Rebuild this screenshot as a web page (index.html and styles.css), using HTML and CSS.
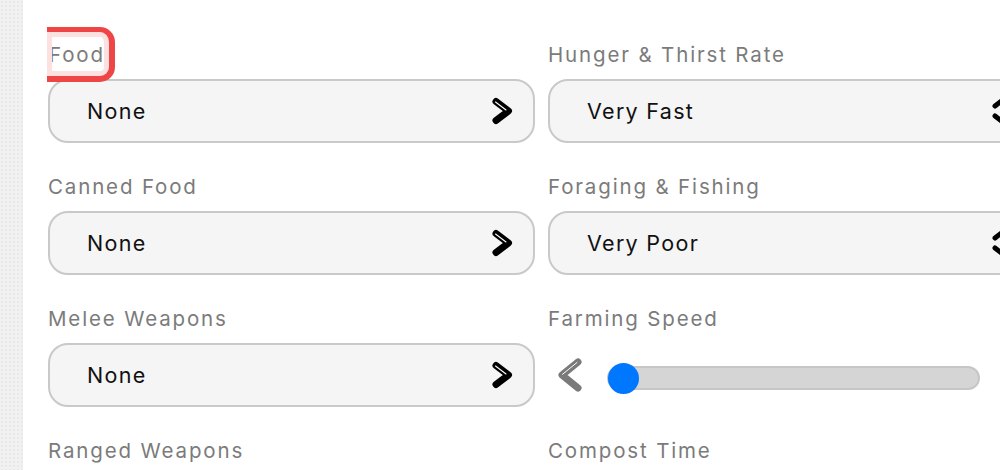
FILE: index.html
```html
<!DOCTYPE html>
<html>
<head>
<meta charset="utf-8">
<link rel="stylesheet" href="styles.css">
</head>
<body>
<div class="page">
  <aside class="strip"></aside>
  <main class="settings">
    <div class="field">
      <div class="label"><span class="focus">Food</span></div>
      <div class="select">
        <span class="value">None</span>
        <svg class="chev" width="22" height="28" viewBox="0 0 22 28"><polyline points="5,4.5 17.5,14 5,23.5" fill="none" stroke="#000" stroke-width="7" stroke-linecap="round" stroke-linejoin="round"/><polyline points="4.5,5 15,13" fill="none" stroke="#fff" stroke-width="1.1" stroke-linecap="round"/></svg>
      </div>
    </div>
    <div class="field">
      <div class="label">Hunger &amp; Thirst Rate</div>
      <div class="select">
        <span class="value">Very Fast</span>
        <svg class="chev" width="22" height="28" viewBox="0 0 22 28"><polyline points="4,9 11,3.5 18,9" fill="none" stroke="#000" stroke-width="5" stroke-linecap="round" stroke-linejoin="round"/><polyline points="4,19 11,24.5 18,19" fill="none" stroke="#000" stroke-width="5" stroke-linecap="round" stroke-linejoin="round"/></svg>
      </div>
    </div>
    <div class="field">
      <div class="label">Canned Food</div>
      <div class="select">
        <span class="value">None</span>
        <svg class="chev" width="22" height="28" viewBox="0 0 22 28"><polyline points="5,4.5 17.5,14 5,23.5" fill="none" stroke="#000" stroke-width="7" stroke-linecap="round" stroke-linejoin="round"/><polyline points="4.5,5 15,13" fill="none" stroke="#fff" stroke-width="1.1" stroke-linecap="round"/></svg>
      </div>
    </div>
    <div class="field">
      <div class="label">Foraging &amp; Fishing</div>
      <div class="select">
        <span class="value">Very Poor</span>
        <svg class="chev" width="22" height="28" viewBox="0 0 22 28"><polyline points="4,9 11,3.5 18,9" fill="none" stroke="#000" stroke-width="5" stroke-linecap="round" stroke-linejoin="round"/><polyline points="4,19 11,24.5 18,19" fill="none" stroke="#000" stroke-width="5" stroke-linecap="round" stroke-linejoin="round"/></svg>
      </div>
    </div>
    <div class="field">
      <div class="label">Melee Weapons</div>
      <div class="select">
        <span class="value">None</span>
        <svg class="chev" width="22" height="28" viewBox="0 0 22 28"><polyline points="5,4.5 17.5,14 5,23.5" fill="none" stroke="#000" stroke-width="7" stroke-linecap="round" stroke-linejoin="round"/><polyline points="4.5,5 15,13" fill="none" stroke="#fff" stroke-width="1.1" stroke-linecap="round"/></svg>
      </div>
    </div>
    <div class="field">
      <div class="label">Farming Speed</div>
      <div class="slider">
        <svg class="arrow" width="28" height="36" viewBox="0 0 28 36"><polyline points="22,5 6,18 22,31" fill="none" stroke="#7a7a7a" stroke-width="7" stroke-linecap="round" stroke-linejoin="round"/><polyline points="21,5.5 6.5,17.3" fill="none" stroke="#fff" stroke-width="1" stroke-linecap="round"/></svg>
        <div class="track"><span class="knob"></span></div>
        <svg class="arrow" width="28" height="36" viewBox="0 0 28 36"><polyline points="6,5 22,18 6,31" fill="none" stroke="#7a7a7a" stroke-width="7" stroke-linecap="round" stroke-linejoin="round"/></svg>
      </div>
    </div>
    <div class="field last">
      <div class="label">Ranged Weapons</div>
    </div>
    <div class="field last">
      <div class="label">Compost Time</div>
    </div>
  </main>
</div>
</body>
</html>
```

FILE: styles.css
```css
html, body {
  margin: 0;
  padding: 0;
  background: #ffffff;
  overflow: hidden;
  width: 1000px;
  height: 470px;
}

.page {
  display: flex;
  height: 470px;
  overflow: hidden;
  font-family: Inter, "Noto Sans", "Liberation Sans", sans-serif;
}

.strip {
  width: 22px;
  flex: 0 0 22px;
  background-color: #f1f1f1;
  background-image: radial-gradient(circle, #e2e2e2 0.6px, transparent 0.9px);
  background-size: 4px 4px;
  border-right: 1px solid #ececec;
}

.settings {
  flex: 0 0 auto;
  display: grid;
  grid-template-columns: 487px 487px;
  column-gap: 13px;
  align-content: start;
  padding: 43px 0 0 25px;
}

.field {
  display: flex;
  flex-direction: column;
  padding-bottom: 32px;
}

.field.last {
  padding-bottom: 0;
}

.label {
  font-size: 20.5px;
  line-height: 24px;
  height: 24px;
  color: #7b7b7b;
  margin-bottom: 12px;
  white-space: nowrap;
  letter-spacing: 1.85px;
}

.focus {
  position: relative;
  display: inline-block;
  padding-left: 1px;
}

.focus::after {
  content: "";
  position: absolute;
  left: -1px;
  top: -16px;
  right: -10px;
  bottom: -15px;
  border: 5px solid #ee4646;
  border-bottom-width: 6px;
  border-right-width: 6px;
  border-left: 0;
  border-radius: 0 15px 15px 0;
  box-shadow: inset 0 0 0 5px #fde0e0;
}

.select {
  box-sizing: border-box;
  height: 64px;
  background: #f5f5f5;
  border: 2px solid #c9c9c9;
  border-radius: 20px;
  display: flex;
  align-items: center;
  justify-content: space-between;
  padding: 0 20px 0 37px;
}

.value {
  font-size: 21.5px;
  color: #111111;
  letter-spacing: 1.3px;
}

.chev {
  display: block;
}

.slider {
  height: 64px;
  display: flex;
  align-items: center;
  padding: 6px 8px 0 8px;
  box-sizing: border-box;
}

.arrow {
  display: block;
  flex: 0 0 28px;
}

.slider .arrow:first-child {
  margin-top: -6px;
}

.track {
  position: relative;
  flex: 1;
  height: 24px;
  box-sizing: border-box;
  margin: 0 19px 0 23px;
  background: #d5d5d5;
  border: 2px solid #c6c6c6;
  border-radius: 12px;
}

.knob {
  position: absolute;
  left: -1px;
  top: -5px;
  width: 31px;
  height: 31px;
  border-radius: 50%;
  background: #0077ff;
}
```
